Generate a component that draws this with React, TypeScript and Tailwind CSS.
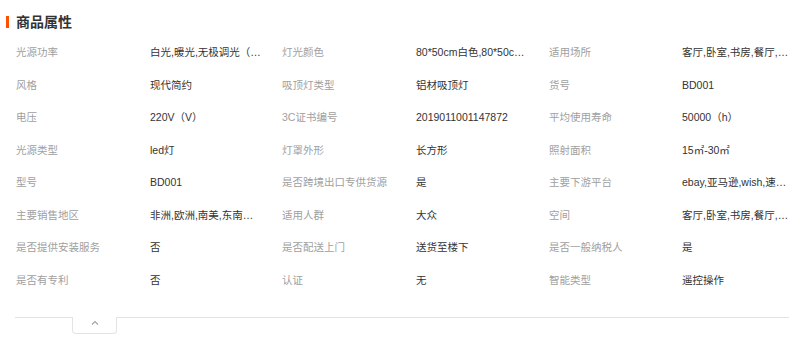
const rows: [string, string, string, string, string, string][] = [
  ['光源功率', '白光,暖光,无极调光（三色变光）', '灯光颜色', '80*50cm白色,80*50cm黑色', '适用场所', '客厅,卧室,书房,餐厅,阳台'],
  ['风格', '现代简约', '吸顶灯类型', '铝材吸顶灯', '货号', 'BD001'],
  ['电压', '220V（V）', '3C证书编号', '2019011001147872', '平均使用寿命', '50000（h）'],
  ['光源类型', 'led灯', '灯罩外形', '长方形', '照射面积', '15㎡-30㎡'],
  ['型号', 'BD001', '是否跨境出口专供货源', '是', '主要下游平台', 'ebay,亚马逊,wish,速卖通'],
  ['主要销售地区', '非洲,欧洲,南美,东南亚,北美', '适用人群', '大众', '空间', '客厅,卧室,书房,餐厅,阳台'],
  ['是否提供安装服务', '否', '是否配送上门', '送货至楼下', '是否一般纳税人', '是'],
  ['是否有专利', '否', '认证', '无', '智能类型', '遥控操作'],
];

const font = { fontFamily: '"Liberation Sans", "Noto Sans CJK SC", sans-serif' };

const App = () => {
  return (
    <div className="w-[789px] h-[337px] bg-white overflow-hidden" style={font}>
      {/* title */}
      <div className="mt-[12px] h-[20px] pl-[6px] flex items-center">
        <div className="w-[3px] h-[12px] bg-[#ff5000]" />
        <span className="ml-[7px] text-[14px] font-bold text-[#333] leading-none">商品属性</span>
      </div>

      <div className="mt-[4px] pl-[16px]">
        {rows.map((r, i) => (
          <div key={i} className="flex items-center h-[32.5px] text-[10.5px] leading-[14px]">
            <div className="w-[134px] shrink-0 text-[#a0a0a0] truncate pr-[6px]">{r[0]}</div>
            <div className="w-[132px] shrink-0 text-[#333] pr-[20px] truncate">{r[1]}</div>
            <div className="w-[134px] shrink-0 text-[#a0a0a0] truncate pr-[6px]">{r[2]}</div>
            <div className="w-[133px] shrink-0 text-[#333] pr-[21px] truncate">{r[3]}</div>
            <div className="w-[133px] shrink-0 text-[#a0a0a0] truncate pr-[6px]">{r[4]}</div>
            <div className="w-[107px] shrink-0 text-[#333] truncate">{r[5]}</div>
          </div>
        ))}
      </div>

      {/* collapse tab */}
      <div className="mt-[21px] pl-[15px] flex items-start">
        <div className="w-[57px] border-t border-[#e3e3e3]" />
        <div className="w-[45px] h-[17px] border-x border-b border-[#e3e3e3] rounded-b-[4px] flex justify-center pt-[3px]">
          <svg width="8" height="5" viewBox="0 0 8 5" fill="none">
            <polyline points="1,4.5 4,1.5 7,4.5" stroke="#9aa4b4" strokeWidth="1.2" />
          </svg>
        </div>
        <div className="flex-1 border-t border-[#e3e3e3]" />
      </div>
    </div>
  );
};

export default App;
